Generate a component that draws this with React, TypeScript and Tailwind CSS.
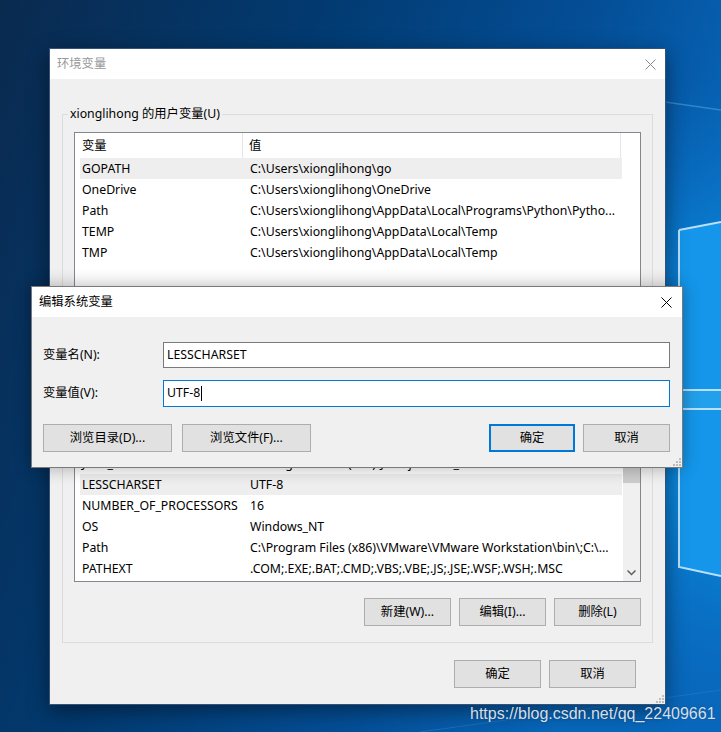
import React from 'react';

type Row = [string, string];

const userRows: Row[] = [
  ['GOPATH', 'C:\\Users\\xionglihong\\go'],
  ['OneDrive', 'C:\\Users\\xionglihong\\OneDrive'],
  ['Path', 'C:\\Users\\xionglihong\\AppData\\Local\\Programs\\Python\\Pytho...'],
  ['TEMP', 'C:\\Users\\xionglihong\\AppData\\Local\\Temp'],
  ['TMP', 'C:\\Users\\xionglihong\\AppData\\Local\\Temp'],
];

// first rows sit under the edit dialog, so they carry no text
const systemRows: Row[] = [
  ['', ''],
  ['', ''],
  ['JAVA_HOME', 'C:\\Program Files (x86)\\Java\\jdk1.8.0_201'],
  ['LESSCHARSET', 'UTF-8'],
  ['NUMBER_OF_PROCESSORS', '16'],
  ['OS', 'Windows_NT'],
  ['Path', 'C:\\Program Files (x86)\\VMware\\VMware Workstation\\bin\\;C:\\...'],
  ['PATHEXT', '.COM;.EXE;.BAT;.CMD;.VBS;.VBE;.JS;.JSE;.WSF;.WSH;.MSC'],
];

function clsx(...parts: (string | false | undefined)[]) {
  return parts.filter(Boolean).join(' ');
}

const CloseIcon = ({ color }: { color: string }) => (
  <svg width="11" height="11" viewBox="0 0 11 11">
    <path d="M0.5 0.5 L10.5 10.5 M10.5 0.5 L0.5 10.5" stroke={color} strokeWidth="1" />
  </svg>
);

const Grip = () => (
  <svg width="8" height="8" viewBox="0 0 8 8">
    {[
      [6, 0],
      [3, 3],
      [6, 3],
      [0, 6],
      [3, 6],
      [6, 6],
    ].map(([x, y]) => (
      <rect key={`${x}-${y}`} x={x} y={y} width="2" height="2" fill="#bdbdbd" />
    ))}
  </svg>
);

const Button = ({ label, width, primary }: { label: string; width: string; primary?: boolean }) => (
  <div
    className={clsx(
      'flex h-[28px] items-center justify-center bg-[#e1e1e1] text-black',
      width,
      primary ? 'border-2 border-[#0078d7]' : 'border border-[#adadad]'
    )}
  >
    {label}
  </div>
);

const ListView = ({
  rows,
  selected,
  height,
  header = true,
  scroll,
}: {
  rows: Row[];
  selected: number;
  height: string;
  header?: boolean;
  scroll?: boolean;
}) => (
  <div className={clsx('flex overflow-hidden border border-[#828790] bg-white', height)}>
    <div className="flex-1 overflow-hidden pl-[5px]">
      <div className="flex h-[25px]">
        <div className="flex w-[163px] shrink-0 items-center border-r border-[#e5e5e5] pl-[2px]">{header ? '变量' : ''}</div>
        <div className="flex w-[378px] shrink-0 items-center border-r border-[#e5e5e5] pl-[6px]">{header ? '值' : ''}</div>
      </div>
      {rows.map((row, i) => (
        <div
          key={`${row[0]}-${i}`}
          className={clsx('flex h-[21px] w-[542px] items-center whitespace-nowrap', i === selected && 'bg-[#eeeeee]')}
        >
          <div className="w-[163px] shrink-0 overflow-hidden pl-[2px]">{row[0]}</div>
          <div className="w-[379px] shrink-0 overflow-hidden pl-[7px]">{row[1]}</div>
        </div>
      ))}
    </div>
    {scroll && (
      <div className="flex w-[17px] shrink-0 flex-col bg-[#f0f0f0]">
        <div className="h-[17px]" />
        <div className="mt-[38px] h-[42px] bg-[#cdcdcd]" />
        <div className="flex-1" />
        <div className="flex h-[17px] items-center justify-center">
          <svg width="9" height="6" viewBox="0 0 9 6">
            <path d="M0.5 0.5 L4.5 4.5 L8.5 0.5" stroke="#606060" strokeWidth="1.5" fill="none" />
          </svg>
        </div>
      </div>
    )}
  </div>
);

const Desktop = () => (
  <svg className="absolute inset-0" width="721" height="732" viewBox="0 0 721 732">
    <defs>
      <linearGradient id="base" x1="0" y1="0" x2="1" y2="0.35">
        <stop offset="0" stopColor="#0a2a4f" />
        <stop offset="0.4" stopColor="#023a70" />
        <stop offset="0.75" stopColor="#044f98" />
        <stop offset="1" stopColor="#0867bb" />
      </linearGradient>
      <radialGradient id="glow" cx="790" cy="400" r="330" gradientUnits="userSpaceOnUse">
        <stop offset="0" stopColor="#13a0f0" stopOpacity="1" />
        <stop offset="0.45" stopColor="#0a84d8" stopOpacity="0.95" />
        <stop offset="1" stopColor="#0a6cc0" stopOpacity="0" />
      </radialGradient>
    </defs>
    <rect width="721" height="732" fill="url(#base)" />
    <rect width="721" height="732" fill="url(#glow)" />
    <polygon points="679,230 721,222 721,390 679,390" fill="#1596ea" />
    <polygon points="679,409 721,409 721,576 679,567" fill="#1596ea" />
    <rect x="660" y="390" width="61" height="19" fill="#22a0ec" />
    <path
      d="M679 230 L721 222 M679 230 L679 567 L721 576 M660 390 L721 390 M660 409 L721 409"
      stroke="#b8e2fb"
      strokeWidth="2"
      fill="none"
    />
    <path d="M665 102 L721 110" stroke="#4f9ede" strokeWidth="1.5" opacity="0.6" />
    <path d="M420 732 L721 690" stroke="#2f7fc8" strokeWidth="1" opacity="0.5" />
  </svg>
);

export default function App() {
  return (
    <div className="relative h-[732px] w-[721px] overflow-hidden font-['Noto_Sans','Noto_Sans_CJK_SC',sans-serif] text-[12.3px] text-black">
      <Desktop />

      {/* 环境变量 (inactive) */}
      <div className="absolute left-[49px] top-[48px] flex h-[657px] w-[617px] flex-col border border-[#34527a] bg-[#f0f0f0] shadow-[0_6px_20px_rgba(0,0,0,0.45)]">
        <div className="flex h-[30px] shrink-0 items-center justify-between bg-white pl-[7px] pr-[9px] text-[#999999]">
          <span>环境变量</span>
          <CloseIcon color="#8a8a8a" />
        </div>
        <div className="relative flex flex-1 flex-col px-[12px] pt-[27px]">
          <fieldset className="border border-[#dcdcdc] px-[11px] pb-[16px] leading-[16px]">
            <legend className="ml-[-6px] px-[2px] leading-[16px]">xionglihong 的用户变量(U)</legend>
            <div className="mt-[10px]">
              <ListView rows={userRows} selected={0} height="h-[160px]" />
            </div>
            <div className="mt-[17px] flex h-[28px] justify-end gap-[8px]" />
          </fieldset>
          <fieldset className="mt-[5px] border border-[#dcdcdc] px-[11px] pb-[16px] leading-[16px]">
            <legend className="ml-[-6px] h-[16px] px-[2px] leading-[16px]" />
            <div className="mt-[10px]">
              <ListView rows={systemRows} selected={3} height="h-[197px]" header={false} scroll />
            </div>
            <div className="mt-[16px] flex justify-end gap-[8px]">
              <Button label="新建(W)..." width="w-[87px]" />
              <Button label="编辑(I)..." width="w-[87px]" />
              <Button label="删除(L)" width="w-[87px]" />
            </div>
          </fieldset>
          <div className="mt-[17px] flex justify-end gap-[8px] pr-[17px]">
            <Button label="确定" width="w-[87px]" />
            <Button label="取消" width="w-[87px]" />
          </div>
          <div className="absolute bottom-[1px] right-[1px]">
            <Grip />
          </div>
        </div>
      </div>

      {/* 编辑系统变量 (active) */}
      <div className="absolute left-[31px] top-[286px] flex h-[182px] w-[652px] flex-col border border-[#7a7a7a] bg-[#f0f0f0] shadow-[0_0_16px_rgba(0,0,0,0.3)]">
        <div className="flex h-[30px] shrink-0 items-center justify-between bg-white pl-[7px] pr-[10px]">
          <span>编辑系统变量</span>
          <CloseIcon color="#000000" />
        </div>
        <div className="relative flex flex-1 flex-col pl-[11px] pr-[12px] pt-[25px]">
          <div className="flex h-[26px] items-center">
            <div className="w-[120px] shrink-0">变量名(N):</div>
            <div className="flex h-full flex-1 items-center border border-[#7a7a7a] bg-white pl-[3px]">LESSCHARSET</div>
          </div>
          <div className="mt-[12px] flex h-[27px] items-center">
            <div className="w-[120px] shrink-0">变量值(V):</div>
            <div className="flex h-full flex-1 items-center border border-[#0078d7] bg-white pl-[3px]">
              UTF-8<span className="ml-[1px] inline-block h-[15px] w-[1px] bg-black" />
            </div>
          </div>
          <div className="mt-[17px] flex items-center">
            <Button label="浏览目录(D)..." width="w-[129px]" />
            <div className="ml-[10px]">
              <Button label="浏览文件(F)..." width="w-[129px]" />
            </div>
            <div className="flex-1" />
            <Button label="确定" width="w-[86px]" primary />
            <div className="ml-[8px]">
              <Button label="取消" width="w-[87px]" />
            </div>
          </div>
          <div className="absolute bottom-[1px] right-[1px]">
            <Grip />
          </div>
        </div>
      </div>

      <div className="absolute left-[470px] top-[702px] font-['Liberation_Sans',sans-serif] text-[16px] text-[#d7dee6] [text-shadow:0_0_2px_rgba(0,0,0,0.25)]">
        https://blog.csdn.net/qq_22409661
      </div>
    </div>
  );
}
